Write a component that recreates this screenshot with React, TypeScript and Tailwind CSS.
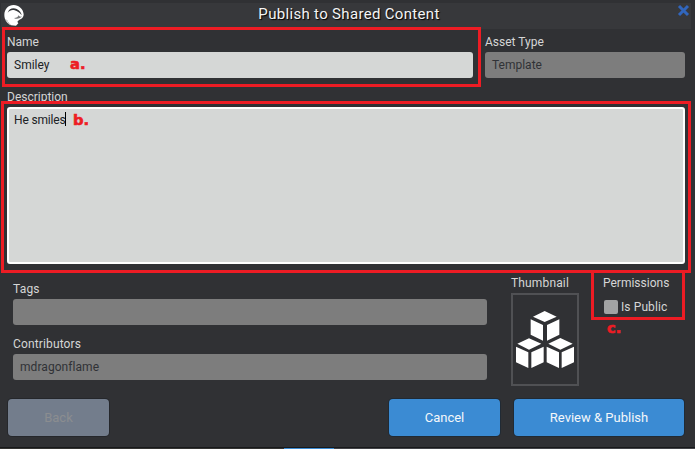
import React from "react";

const field = "flex h-[26px] items-center rounded-[3px] pl-[7px] text-[12px]";
const label = "h-[20px] leading-[20px] text-[12px] text-[#d5d6d6] whitespace-nowrap";
const mark = "absolute origin-left scale-x-105 text-[#ed1c24] font-['DejaVu_Sans'] font-bold text-[14px] leading-[16px] [-webkit-text-stroke:0.6px_#ed1c24]";

function Logo() {
  return (
    <svg className="block h-[21px] w-[20px]" viewBox="10 15 60 63">
      <path d="M39 15C54 15 68 27 69 43C69 49 66 54 62 56L55 60L50 65L53 70L46 77L31 76C20 72 11 60 11 45C11 27 23 15 39 15Z" fill="#fff" />
      <path d="M21 38C25 25 38 22 48 27C57 31 62 38 63 46C56 37 50 33 42 31C34 29 27 31 21 38Z" fill="#333538" />
      <path d="M64 49C60 55 53 57 44 56L40 54C48 54 52 52 53 46C56 50 60 51 64 49Z" fill="#77797b" />
      <path d="M14 59L20 62L18 64L25 69L24 71L30 74" stroke="#777" strokeWidth="1.5" fill="none" />
    </svg>
  );
}

function Cubes() {
  return (
    <svg className="block h-full w-full" viewBox="150 135 192 267" fill="#fff">
      <path d="M210 200L245 183L281 200L245 216ZM203 208L240 225V272L203 254ZM252 225L289 208V254L252 272Z" />
      <path d="M163 281L198 265L235 281L198 299ZM159 290L196 307V354L159 337ZM205 307L242 290V337L205 354Z" />
      <path d="M256 281L292 264L329 281L292 299ZM251 290L288 307V354L251 337ZM296 307L333 290V337L296 354Z" />
    </svg>
  );
}

export default function App() {
  return (
    <div className="relative flex h-[449px] w-[695px] flex-col overflow-hidden bg-[#303134] font-[Roboto,sans-serif]">
      <header className="mt-[3px] mr-[4px] ml-px flex h-[26px] shrink-0 items-start justify-between bg-[#37383b]">
        <div className="w-[25px] pt-[2px] pl-[3px]"><Logo /></div>
        <h1 className="pt-px pr-[5px] text-[15px] leading-[20px] tracking-[0.32px] text-[#f4f4f4] [text-shadow:1px_1px_1px_#000]">Publish to Shared Content</h1>
        <svg className="mt-[1px] mr-[1px] h-[13px] w-[13px]" viewBox="0 0 13 13">
          <path d="M2 2L11 11M11 2L2 11" stroke="#3166bd" strokeWidth="3" />
        </svg>
      </header>

      <div className="mt-[3px] flex gap-[12px] pl-[7px]">
        <div className="w-[466px]">
          <div className={label}>Name</div>
          <div className={`${field} bg-[#d5d7d6] text-[#202225]`}>Smiley</div>
        </div>
        <div className="w-[200px]">
          <div className={label}>Asset Type</div>
          <div className={`${field} bg-[#7d7d7d] text-[#303236]`}>Template</div>
        </div>
      </div>

      <div className="mt-[9px] pl-[7px]">
        <div className={label}>Description</div>
        <div className="flex h-[157px] w-[678px] rounded-[3px] border-2 border-white bg-[#d5d7d6] pt-[3px] pl-[5px] text-[12px] leading-[16px] text-[#202225]">
          <span className="tracking-[-0.17px]">He smiles</span>
          <span className="h-[14px] w-px bg-black" />
        </div>
      </div>

      <div className="flex h-[122px] shrink-0 pl-[13px]">
        <div className="w-[474px] pt-[15px]">
          <div className={`${label} tracking-[0.2px]`}>Tags</div>
          <div className={`${field} bg-[#7d7d7d]`} />
          <div className={`${label} mt-[9px] tracking-[0.14px]`}>Contributors</div>
          <div className={`${field} bg-[#7d7d7d] text-[#303236] tracking-[0.06px]`}>mdragonflame</div>
        </div>
        <div className="ml-[24px] w-[68px] pt-[9px]">
          <div className={`${label} tracking-[0.15px]`}>Thumbnail</div>
          <div className="h-[93px] border-2 border-[#505154]"><Cubes /></div>
        </div>
        <div className="ml-[24px] pt-[9px]">
          <div className={label}>Permissions</div>
          <div className="mt-[4px] flex items-center gap-[3px] pl-px">
            <div className="h-[14px] w-[14px] rounded-[2px] bg-[#a2a3a3]" />
            <div className={`${label} tracking-[0.1px]`}>Is Public</div>
          </div>
        </div>
      </div>

      <div className="mt-[13px] flex h-[37px] shrink-0 pl-[8px] text-[13px] text-[#f4f7fa]">
        <button className="w-[101px] rounded-[4px] bg-[#737d8c] text-[#8b8d90] shadow-[0_0_0_1px_#25272b]">Back</button>
        <button className="ml-[280px] w-[111px] rounded-[4px] bg-[#3b8bd3] shadow-[0_0_0_1px_#202a34]">Cancel</button>
        <button className="ml-[14px] w-[170px] rounded-[4px] bg-[#3b8bd3] shadow-[0_0_0_1px_#202a34]">Review &amp; Publish</button>
      </div>

      <div className="mt-[11px] h-px shrink-0 bg-[#18191b]" />
      <div className="flex h-px shrink-0 bg-[#424347]">
        <div className="w-[284px] bg-[#343432]" />
        <div className="w-[50px] bg-[#3b8bd3]" />
      </div>

      <div className="absolute top-[27px] left-[2px] h-[60px] w-[479px] border-[3px] border-[#ed1c24]" />
      <div className="absolute top-[101px] left-px h-[172px] w-[690px] border-[3px] border-[#ed1c24]" />
      <div className="absolute top-[270px] left-[591px] h-[50px] w-[94px] border-[3px] border-[#ed1c24]" />
      <span className={`${mark} top-[56px] left-[70px]`}>a.</span>
      <span className={`${mark} top-[112px] left-[73px]`}>b.</span>
      <span className={`${mark} top-[320px] left-[607px]`}>c.</span>
    </div>
  );
}
